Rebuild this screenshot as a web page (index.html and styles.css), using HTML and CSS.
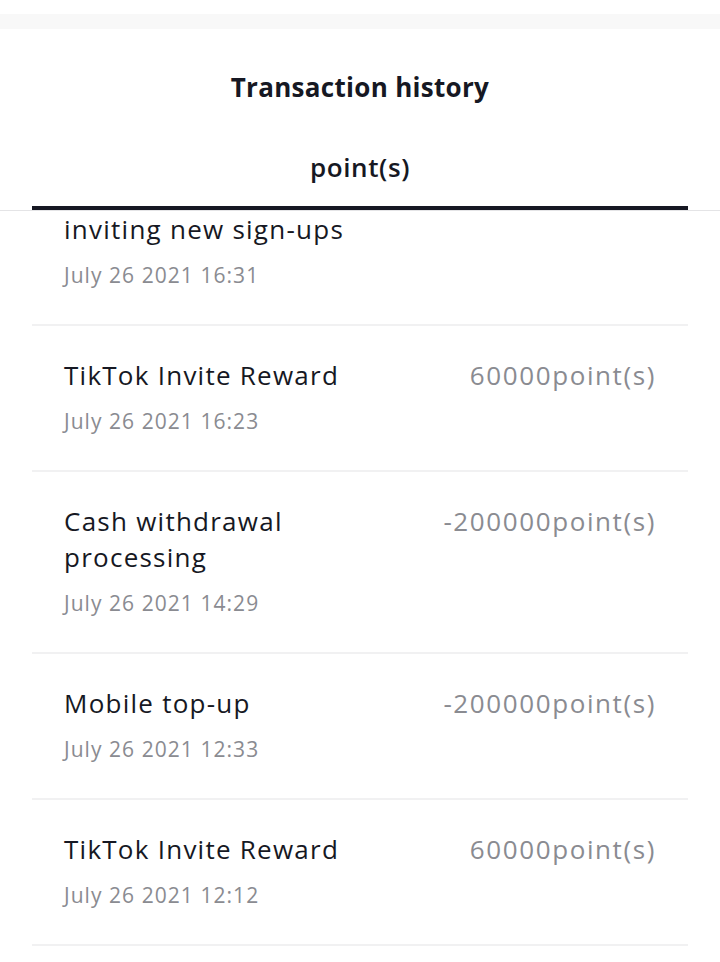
FILE: index.html
```html
<!DOCTYPE html>
<html lang="en">
<head>
    <meta charset="UTF-8">
    <meta name="viewport" content="width=device-width, initial-scale=1.0">
    <title>Transaction history</title>
    <link rel="stylesheet" href="styles.css">
</head>
<body>
    <div class="top-gap"></div>
    <div class="top-band"></div>

    <header class="history-header">
        <h1 class="history-title">Transaction history</h1>
        <nav class="tabs">
            <div class="tab active">point(s)</div>
        </nav>
    </header>

    <div class="history-list">
        <ul class="records">
            <li class="record scrolled">
                <div class="record-main">
                    <div class="record-name">inviting new sign-ups</div>
                    <div class="record-date">July 26 2021 16:31</div>
                </div>
            </li>
            <li class="record">
                <div class="record-main">
                    <div class="record-name">TikTok Invite Reward</div>
                    <div class="record-date">July 26 2021 16:23</div>
                </div>
                <div class="record-amount">60000point(s)</div>
            </li>
            <li class="record">
                <div class="record-main">
                    <div class="record-name">Cash withdrawal<br>processing</div>
                    <div class="record-date">July 26 2021 14:29</div>
                </div>
                <div class="record-amount">-200000point(s)</div>
            </li>
            <li class="record">
                <div class="record-main">
                    <div class="record-name">Mobile top-up</div>
                    <div class="record-date">July 26 2021 12:33</div>
                </div>
                <div class="record-amount">-200000point(s)</div>
            </li>
            <li class="record">
                <div class="record-main">
                    <div class="record-name">TikTok Invite Reward</div>
                    <div class="record-date">July 26 2021 12:12</div>
                </div>
                <div class="record-amount">60000point(s)</div>
            </li>
        </ul>
    </div>
</body>
</html>
```

FILE: styles.css
```css
html, body {
    margin: 0;
    padding: 0;
    height: 100%;
    overflow: hidden;
}

body {
    font-family: "Open Sans", "Noto Sans", sans-serif;
    background: #fff;
    color: #161823;
    display: flex;
    flex-direction: column;
}

.top-gap {
    height: 14px;
    flex-shrink: 0;
}

.top-band {
    height: 15px;
    background-color: #f8f8f8;
    flex-shrink: 0;
}

/* Header */
.history-header {
    flex-shrink: 0;
    background: #fff;
    border-bottom: 1px solid #e4e4e6;
}

.history-title {
    margin: 0;
    padding: 40px 0;
    font-size: 26px;
    line-height: 36px;
    font-weight: 700;
    letter-spacing: 0.3px;
    text-align: center;
}

.tabs {
    display: flex;
    margin: 0 32px;
}

.tab {
    flex: 1;
    text-align: center;
    font-size: 26px;
    line-height: 36px;
    padding: 4px 0 21px;
}

.tab.active {
    border-bottom: 4px solid #161823;
    font-weight: 600;
    letter-spacing: 0.6px;
}

/* List */
.history-list {
    flex: 1;
    overflow: hidden;
}

.records {
    list-style: none;
    margin: 0 32px;
    padding: 0;
}

.record {
    display: flex;
    justify-content: space-between;
    align-items: flex-start;
    gap: 24px;
    padding: 31px 32px 34px;
    border-bottom: 2px solid #f1f1f2;
}

.record.scrolled {
    padding-top: 0;
}

.record-name {
    font-size: 26px;
    line-height: 36px;
    letter-spacing: 1.25px;
    color: #161823;
}

.record-date {
    margin-top: 13px;
    font-size: 21px;
    line-height: 30px;
    letter-spacing: 1.05px;
    color: #8a8b91;
}

.record-amount {
    font-size: 26px;
    line-height: 36px;
    letter-spacing: 1.6px;
    color: #8a8b91;
    white-space: nowrap;
}
```
